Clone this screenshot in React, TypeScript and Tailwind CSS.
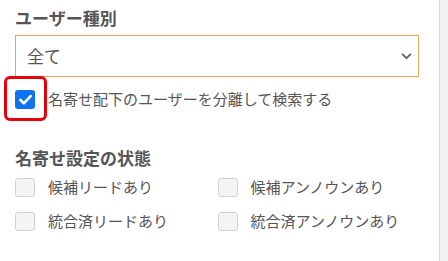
import React, { useState } from "react";

const statusOptions = [
  { id: "candLead", label: "候補リードあり" },
  { id: "candUnknown", label: "候補アンノウンあり" },
  { id: "mergedLead", label: "統合済リードあり" },
  { id: "mergedUnknown", label: "統合済アンノウンあり" },
];

function CheckBox({ checked, onChange }: { checked: boolean; onChange: () => void }) {
  return (
    <button
      type="button"
      onClick={onChange}
      className={
        checked
          ? "flex h-[19px] w-[20px] shrink-0 items-center justify-center rounded-[3px] bg-[#0d72f2]"
          : "h-[19px] w-[20px] shrink-0 rounded-[3px] border border-[#d2d2d2] bg-[#f4f4f4]"
      }
    >
      {checked && (
        <svg viewBox="0 0 20 20" className="h-[17px] w-[17px]">
          <path d="M4 10.5l4 4 8-8.5" fill="none" stroke="#fff" strokeWidth="3.2" strokeLinecap="round" strokeLinejoin="round" />
        </svg>
      )}
    </button>
  );
}

export default function App() {
  const [userType, setUserType] = useState("all");
  const [separate, setSeparate] = useState(true);
  const [status, setStatus] = useState<Record<string, boolean>>({});

  return (
    <div className="flex h-[261px] w-[448px] bg-white font-['Noto_Sans_CJK_JP',sans-serif] text-[#555]">
      <div className="flex-1 pl-[15px] pr-[20px] pt-[7px]">
        {/* ユーザー種別 */}
        <h3 className="text-[17px] font-bold leading-[22px]">ユーザー種別</h3>
        <div className="relative mt-[6px] h-[42px] border border-[#e9a463] bg-white">
          <select
            value={userType}
            onChange={(e) => setUserType(e.target.value)}
            className="h-full w-full appearance-none bg-transparent pl-[11px] text-[17px] text-[#555] outline-none"
          >
            <option value="all">全て</option>
            <option value="lead">リード</option>
            <option value="unknown">アンノウン</option>
          </select>
          <svg viewBox="0 0 12 8" className="pointer-events-none absolute right-[6px] top-[17px] h-[7px] w-[11px]">
            <path d="M1 1l5 5 5-5" fill="none" stroke="#666" strokeWidth="2.2" />
          </svg>
        </div>

        {/* 分離して検索 */}
        <div className="mt-[12px] flex items-center">
          <div className="relative">
            <CheckBox checked={separate} onChange={() => setSeparate(!separate)} />
            <div className="pointer-events-none absolute -left-[11px] -top-[14px] h-[45px] w-[43px] rounded-[6px] border-[3px] border-[#e8000b]" />
          </div>
          <span className="ml-[13px] text-[15px] leading-[20px]">名寄せ配下のユーザーを分離して検索する</span>
        </div>

        {/* 名寄せ設定の状態 */}
        <h3 className="mt-[38px] text-[17px] font-bold leading-[22px]">名寄せ設定の状態</h3>
        <div className="mt-[8px] grid grid-cols-2 gap-x-[1px] gap-y-[14px]">
          {statusOptions.map((opt) => (
            <label key={opt.id} className="flex items-center">
              <CheckBox
                checked={!!status[opt.id]}
                onChange={() => setStatus({ ...status, [opt.id]: !status[opt.id] })}
              />
              <span className="ml-[13px] text-[15px] leading-[20px]">{opt.label}</span>
            </label>
          ))}
        </div>
      </div>
      <div className="w-[9px] border-l border-[#d4dbe3] bg-[#f1f1f1]" />
    </div>
  );
}
